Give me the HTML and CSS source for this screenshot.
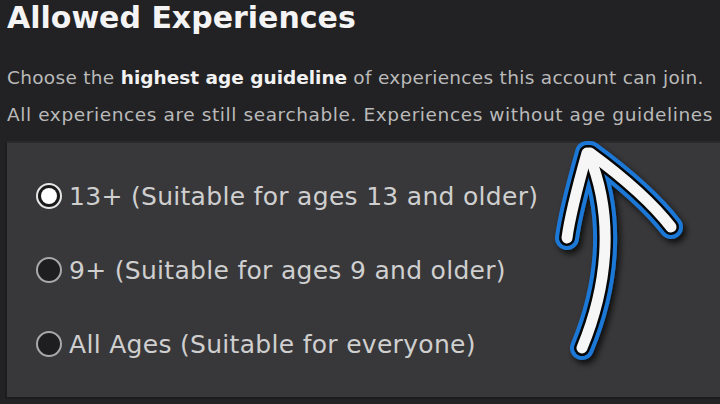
FILE: index.html
```html
<!DOCTYPE html>
<html>
<head>
<meta charset="utf-8">
<link rel="stylesheet" href="styles.css">
</head>
<body>
<main class="page">
  <h1 class="title">Allowed Experiences</h1>
  <p class="desc">Choose the <strong>highest age guideline</strong> of experiences this account can join.</p>
  <p class="desc desc2">All experiences are still searchable. Experiences without age guidelines</p>
  <section class="panel">
    <label class="option"><span class="radio checked"></span><span class="opt-text">13+ (Suitable for ages 13 and older)</span></label>
    <label class="option"><span class="radio"></span><span class="opt-text">9+ (Suitable for ages 9 and older)</span></label>
    <label class="option"><span class="radio"></span><span class="opt-text">All Ages (Suitable for everyone)</span></label>
  </section>
</main>
<svg class="arrow" width="720" height="404" viewBox="0 0 720 404">
  <defs>
    <filter id="sh" x="-20%" y="-20%" width="140%" height="140%">
      <feDropShadow dx="3" dy="4" stdDeviation="3" flood-color="#000" flood-opacity="0.75"/>
    </filter>
  </defs>
  <g fill="none" stroke-linecap="round" stroke-linejoin="round">
    <g stroke="#1f78d6" stroke-width="24" filter="url(#sh)">
      <path d="M582 348 C606 290 616 220 589 155"/>
      <path d="M587 153 C578 185 570 215 567 238"/>
      <path d="M590 153 C620 175 650 200 671 227"/>
    </g>
    <g stroke="#050608" stroke-width="16">
      <path d="M582 348 C606 290 616 220 589 155"/>
      <path d="M587 153 C578 185 570 215 567 238"/>
      <path d="M590 153 C620 175 650 200 671 227"/>
    </g>
    <g stroke="#f6f6f6" stroke-width="11">
      <path d="M582 348 C606 290 616 220 589 155"/>
      <path d="M587 153 C578 185 570 215 567 238"/>
      <path d="M590 153 C620 175 650 200 671 227"/>
    </g>
  </g>
</svg>
</body>
</html>
```
FILE: styles.css
```css
html, body {
  margin: 0;
  padding: 0;
  background: #222224;
  width: 720px;
  height: 404px;
  overflow: hidden;
}
body {
  position: relative;
  font-family: "DejaVu Sans", sans-serif;
}
.page {
  display: flex;
  flex-direction: column;
  padding: 0 0 0 7px;
}
.title {
  margin: 0;
  font-size: 30px;
  line-height: 36px;
  font-weight: 700;
  color: #f4f4f4;
  white-space: nowrap;
}
.desc {
  margin: 0;
  margin-top: 31px;
  font-size: 18.5px;
  line-height: 22px;
  color: #bababa;
  white-space: nowrap;
  letter-spacing: 0.3px;
}
.desc strong {
  color: #f2f2f2;
  font-weight: 700;
  letter-spacing: 0;
}
.desc2 {
  margin-top: 15px;
  letter-spacing: 0.6px;
}
.panel {
  margin-top: 15px;
  margin-left: -2px;
  height: 258px;
  background: #38383a;
  border-left: 2px solid #1c1c1e;
  border-top: 2px solid #2a2a2c;
  border-bottom: 2px solid #1c1c1e;
  box-sizing: border-box;
  display: flex;
  flex-direction: column;
  padding: 40px 0 0 29px;
  gap: 48px;
}
.option {
  display: flex;
  align-items: center;
  gap: 7px;
  height: 26px;
}
.radio {
  width: 22px;
  height: 22px;
  border-radius: 50%;
  border: 2px solid #a9a9a9;
  background: #1e1e20;
  position: relative;
  flex: none;
}
.radio.checked {
  border-color: #e6e6e6;
  background: #1a1a1a;
}
.radio.checked::after {
  content: "";
  position: absolute;
  left: 3px;
  top: 3px;
  width: 16px;
  height: 16px;
  border-radius: 50%;
  background: #ffffff;
}
.opt-text {
  font-size: 25px;
  color: #cfcfcf;
  white-space: nowrap;
  letter-spacing: 0.3px;
}
.arrow {
  position: absolute;
  left: 0;
  top: 0;
  pointer-events: none;
}
```
